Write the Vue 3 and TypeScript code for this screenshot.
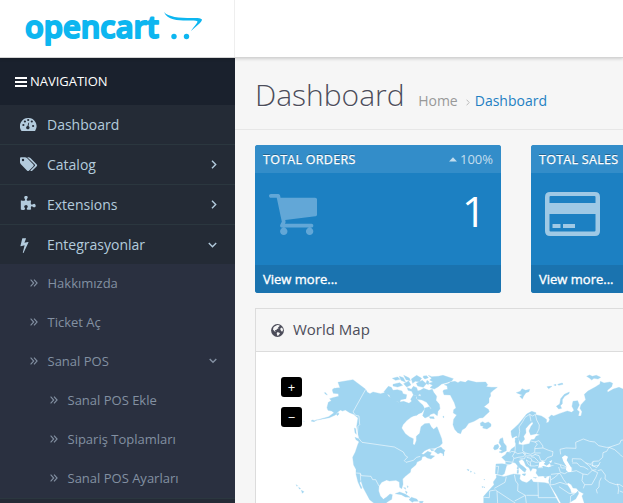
<script setup lang="ts">
interface MenuItem {
  label: string
  icon: string
  arrow?: 'right' | 'down'
}

interface SubItem {
  label: string
  nested?: boolean
  open?: boolean
}

interface Tile {
  title: string
  icon: string
  change?: string
  value?: string
}

const menu: MenuItem[] = [
  { label: 'Dashboard', icon: 'gauge' },
  { label: 'Catalog', icon: 'tags', arrow: 'right' },
  { label: 'Extensions', icon: 'puzzle', arrow: 'right' },
  { label: 'Entegrasyonlar', icon: 'bolt', arrow: 'down' },
]

const submenu: SubItem[] = [
  { label: 'Hakkımızda' },
  { label: 'Ticket Aç' },
  { label: 'Sanal POS', open: true },
  { label: 'Sanal POS Ekle', nested: true },
  { label: 'Sipariş Toplamları', nested: true },
  { label: 'Sanal POS Ayarları', nested: true },
]

const tiles: Tile[] = [
  { title: 'TOTAL ORDERS', icon: 'cart', change: '100%', value: '1' },
  { title: 'TOTAL SALES', icon: 'card' },
]

// Land shapes of the western half of the map
const westLand: string[] = [
  'M219 67L264 59L302 88L307 97L315 101L324 96L347 101L362 97L371 109L381 116L400 127L416 124L432 130L444 121L450 111L463 126L474 136L479 146L470 158L452 164L438 172L426 181L414 194L410 204L421 221L434 231L445 236L444 253L449 255L454 242L454 229L464 220L468 200L479 191L493 190L499 201L506 208L516 200L523 218L530 236L532 250L524 258L510 265L492 266L479 272L469 282L476 283L488 274L499 278L495 286L509 288L498 297L487 294L480 289L472 290L469 300L456 306L453 314L438 327L436 337L421 349L413 357L414 373L410 386L404 382L403 366L393 361L373 363L365 360L350 367L342 378L341 393L346 408L355 418L365 411L375 402L382 404L380 418L368 425L361 431L329 431L314 419L306 404L294 382L288 362L284 369L291 384L288 386L279 366L273 342L273 328L266 315L263 292L271 276L279 252L282 246L279 221L275 199L279 174L266 163L254 158L241 150L232 153L227 150L219 155L211 165L193 173L157 180L191 170L207 158L200 153L189 151L186 143L190 127L199 122L194 116L203 113L221 109L220 101L205 100L202 91L214 84L225 83Z',
  'M113 183l6 2M138 183l5-3 5 2 9-3-10 6zM178 98l4 0 5 7-5-2zM214 162l6-4 2 4-5 5zM202 88l8-4 5 4-5 6z',
  'M268 204l4 2 2 17-4-5zM270 232l14 6 8 9-7 0-12-8z',
  'M93 374l5 3-2 2zM101 382l6 4-4 1zM109 391l8 4-5 5z',
  'M357 95L370 79L379 82L384 91L397 89L411 93L414 101L425 104L423 116L407 119L404 127L385 122L377 116L373 105L363 102Z',
  'M382 55l16-4 7 7-13 3zM384 73l20-5 9 8-15 5-14-3zM403 49l12 4 7 14-14-6zM416 71l15-8 7 12-13 6zM416 46l17 8 3 8-13-3zM439 57l16-11 15 9-7 10-12-1-8 6zM454 70l18-9 12 10-9 11-17-4zM475 48l10-1 5 6-10 4-5-4zM486 61l6 4-2 9-7-4z',
  'M490 46L500 50L520 49L534 46L565 56L560 63L545 68L530 72L520 80L508 87L495 83L503 76L491 70L504 66L494 60L500 55Z',
  'M427 83l12 5 6-9 10 4 3 9 16-1 12 12-8 6-12-8-10 7-11-4-5-10-11-3zM445 105l10 4-5 12-9 4-4-7zM462 93l14-8 16 6 10-3 4 9 9 12-2 12 10 12 2 13-6 8-2 13-10-7-14 4-6-8 12-10-14-19-14-7-15-2-1-13 13 4z',
  'M437 151l11-8 9 5 8 9-9 9-13 2-10-8zM480 144l13-4 8 12-8 16-13 6-7-7zM416 128l13 3 5 9-11 5-8-6zM493 170l13 0 2 6-13-1z',
  'M508 274l8-9 12-4 6 7 6 3-5 10-9-3-7 4zM496 267l12 3-8 3z',
  'M391 401l13-5 18 7 13 9-14-1-12-7zM432 419l7-7 16 5 5 7-13 0-5 3zM463 424l12 0-3 5-8-1zM416 383l5 0 1 5zM426 377l4 3-2 3zM421 393l6 3-3 5z',
]

const westBorders: string[] = [
  'M302 88L264 156L272 166L282 168L284 194L279 199L277 224L282 236L291 247L388 261L415 276L421 287L428 291L418 302L423 307L445 301L455 292L466 289',
  'M273 339L286 340L289 347L318 349L323 359L332 359L342 378M286 341L287 362',
]

// Land shapes of the eastern half of the map
const eastLand: string[] = [
  'M2 90L14 88L12 77L4 74L18 70L22 66L36 64L45 68L52 64L67 67L75 61L100 67L128 66L134 74L130 80L145 82L163 82L151 91L142 99L143 108L138 115L138 128L123 140L136 148L139 155L129 164L120 173L110 174L93 184L77 190L67 204L57 210L53 221L44 218L35 208L30 194L32 178L41 165L31 159L32 149L39 144L34 128L27 115L22 105L3 104L0 94Z',
  'M112 189L119 185L126 190L136 186L144 192L144 199L132 207L119 204L121 199L113 197Z',
  'M220 98l12-4 5-8 11 5 12-3-2 7-9 3-7 10-4 9-8-8 8-4-11-4zM312 80l8-1 7 0-10 7zM332 75l7-2 0 4zM344 73l14-4 2 4-13 3zM431 49l9-4 8 4 12-3 13 6-8 5-12-2-7 5-7-6z',
  'M340 139L350 132L353 116L364 103L379 96L378 101L365 109L358 119L358 131L352 137L356 145L347 147Z',
  'M204 213L215 203L227 192L239 177L251 162L266 154L279 158L278 164L295 168L305 174L311 179L310 189L317 186L320 178L317 173L325 165L332 168L349 161L373 153L386 157L393 151L387 139L390 124L404 122L409 135L402 149L409 155L406 168L414 168L417 155L411 145L414 134L428 119L424 103L435 93L457 81L471 72L472 64L483 69L501 66L509 70L506 80L493 91L494 97L511 87L528 82L540 87V430H424L417 408L422 401L407 393L400 385L390 384L385 374L377 369L371 371L382 388L385 399L398 400L405 393L407 401L398 417L384 425L376 430H354L340 404L326 382L319 372L317 362L321 347L306 350L300 348L286 349L279 339L282 329L278 326L269 325L263 334L258 323L249 318L243 304L237 298L227 303L231 312L244 322L250 328L246 337L240 333L226 320L217 309L210 307L203 312L191 316L184 341L177 346L165 343L157 341L159 312L177 311L188 313L188 304L176 292L187 284L192 276L199 277L205 267L218 258L218 245L216 235L225 232L228 242L227 253L240 255L259 251L264 239L274 238L279 229L291 224L280 221L263 225L258 213L264 199L270 191L268 185L258 194L248 206L249 219L242 229L245 238L235 249L230 244L226 233L220 228L208 234L205 224Z',
  'M160 345L183 350L212 342L232 344L230 357L237 364L251 368L258 364L265 357L271 366L285 367L306 368L317 371L323 382L343 421L348 430H122V409L138 391L153 374L151 366L160 353Z',
  'M168 276L178 272L169 267L175 259L168 248L171 237L179 233L182 248L190 258L190 272L176 279ZM151 265L155 256L165 253L168 260L164 267L155 270Z',
  'M223 330l4 1-1 9-4 0zM224 319l3 2-1 8-4-3zM238 342l10-1-2 6-7-2zM271 352l10 1-2 2zM303 352l7-2-1 4zM217 241l7 0-1 9-7-3z',
  'M72 328l6 1-2 4zM82 333l4 2-3 2zM93 338l4 2-3 0zM117 379l3 2-2 2zM122 380l4 2-3 1zM123 357l2 2-2 1zM0 168l3 2-1 3-2-1zM0 277l3 2-1 8-2 0z',
]

const seas: string[] = [
  'M286 322L289 307L299 303L307 307L302 312L311 317L321 310L323 317L335 315L317 322L301 318L294 322Z',
  'M357 292L366 286L375 290L371 301L378 312L385 323L385 336L376 337L369 330L370 319L361 304Z',
  'M318 305L328 300L324 309Z',
]

const eastBorders: string[] = [
  'M227 232L230 214L228 201L239 185L246 172L260 163L269 168L277 163L281 180L289 195L288 207L281 221M260 163L264 184',
  'M263 243L276 246L283 252L276 262L275 277L263 283L248 279L239 273L240 255M275 246L288 242L299 257L300 264L275 266M300 264L317 271L330 275L328 288L313 293L305 303L293 301L288 287L275 283M275 279L293 279',
  'M217 259L216 276L206 274L200 278M216 276L224 281L239 278L248 281L241 290L225 292L215 295L208 289L216 276M239 278L251 288L269 287L277 283M247 288L245 296L230 297M251 292L264 295L267 302L261 307L249 299M264 290L274 292L286 304M266 302L278 307L290 306M262 307L263 318L275 318L285 316M263 318L255 312L250 300',
  'M188 312L204 316M159 319L167 319L164 341M188 304L209 307L213 294',
  'M353 283L351 268L369 264L399 265L398 247L421 237L440 244L455 246L467 257L490 262L498 262L491 274L480 278L479 292L467 303L451 304L442 313L427 308L414 297L388 296L388 306M498 262L515 269L533 285L540 292M498 262L519 255L530 251L534 241L540 240',
  'M334 309L353 314L369 320M352 315L355 324L371 324M347 321L352 337L365 341L374 336M285 323L300 323M324 343L351 340L362 359L371 371M322 347L323 360L337 351L347 341M323 360L321 375L335 373L351 367L373 374M348 380L378 400L395 401L383 408L382 427',
  'M386 322L386 335L400 332L420 342L434 344L448 331L460 329M387 309L402 309L411 319L423 321L436 329M427 308L441 320L448 331M420 342L417 362L425 374L421 385M425 374L446 374L459 351L464 338L449 331M450 304L448 318L466 317L472 306M442 313L461 323L468 314M464 332L475 329L487 345L486 357L499 367L519 374L529 373L540 380M475 353L469 365L468 381L460 389L463 400M523 371L527 386L525 402M530 393L540 397',
  'M190 350L186 367L154 385M122 412L139 413L140 393L157 390L218 430M162 394L164 430M214 344L218 363L225 372L224 393L247 406L215 423M285 367L286 413M247 406L250 430M286 413H342M286 406L250 406',
]
</script>

<template>
  <div class="screen">
    <header class="topbar">
      <div class="brand">
        <svg class="logo" width="180" height="44" viewBox="24 6 180 44">
          <text x="25" y="37.800" textLength="134" lengthAdjust="spacingAndGlyphs">opencart</text>
          <path d="M164 12C168 17 179 18 192 18C200 18 205 18 200 23L191 31C194 26 199 22 197 21C190 19 169 24 164 12Z" />
          <circle cx="174" cy="36.500" r="2.700" />
          <circle cx="186.500" cy="36.500" r="2.700" />
        </svg>
      </div>
    </header>

    <div class="layout">
      <nav class="sidebar">
        <div class="nav-title">
          <svg width="12" height="10" viewBox="0 0 12 10">
            <path d="M0 0h12v2H0zM0 4h12v2H0zM0 8h12v2H0z" />
          </svg>
          <span>NAVIGATION</span>
        </div>

        <ul class="menu">
          <li v-for="item in menu" :key="item.label">
            <span class="menu-icon">
              <svg v-if="item.icon === 'gauge'" width="17" height="14" viewBox="0 0 17 14">
                <path fill-rule="evenodd" d="M8.200 0A8.200 8.200 0 0 0 1.300 12.700Q1.500 13 2 13H14.500Q15 13 15.200 12.700A8.200 8.200 0 0 0 8.200 0ZM2.300 7a1.100 1.100 0 1 0 2.200 0a1.100 1.100 0 1 0-2.200 0M3.800 3.500a1.100 1.100 0 1 0 2.200 0a1.100 1.100 0 1 0-2.200 0M7.100 2a1.100 1.100 0 1 0 2.200 0a1.100 1.100 0 1 0-2.200 0M10.700 3.500a1.100 1.100 0 1 0 2.200 0a1.100 1.100 0 1 0-2.200 0M12 8a1.100 1.100 0 1 0 2.200 0a1.100 1.100 0 1 0-2.200 0M9.200 4.800L8.500 8.100A1.700 1.700 0 1 1 7.500 8L8.400 4.700Z" />
              </svg>
              <svg v-else-if="item.icon === 'tags'" width="18" height="15" viewBox="0 0 18 15">
                <path fill-rule="evenodd" d="M0 1.200Q0 .2 1 .2H5Q6 .2 7 1L13.400 7.500Q14.200 8.300 13.400 9.200L8.900 13.700Q8 14.500 7.200 13.700L.9 7.300Q0 6.300 0 5.300ZM1.800 3a1.200 1.200 0 1 0 2.400 0a1.200 1.200 0 1 0-2.400 0" />
                <path d="M7.200.2H8.500Q9.400.2 10.400 1L16.800 7.500Q17.600 8.300 16.800 9.200L12.200 13.700Q11.300 14.500 10.300 13.500L14.700 9.100Q15.500 8.300 14.700 7.500Z" />
              </svg>
              <svg v-else-if="item.icon === 'puzzle'" class="puzzle" width="16" height="16" viewBox="0 0 1792 1792">
                <path d="M1755 1083q0 81-44.500 135t-123.500 54q-41 0-77.500-17.500t-59-38-56.500-38-71-17.500q-110 0-110 124 0 39 16 115t15 115v5q-22 0-33 1-34 3-97.500 11.500t-115.500 13.500-98 5q-61 0-103-26.500t-42-83.500q0-37 17.500-71t38-56.500 38-59 17.500-77.500q0-79-54-123.500t-135-44.500q-84 0-143 45.500t-59 127.500q0 43 15 83t33.500 64.500 33.500 53 15 50.500q0 45-46 89-37 35-117 35-95 0-245-24-9-2-27.500-4t-27.500-4l-13-2q-1 0-3-1-2 0-2-1v-1024q2 1 17.500 3.500t34 5 21.500 3.500q150 24 245 24 80 0 117-35 46-44 46-89 0-22-15-50.500t-33.500-53-33.500-64.500-15-83q0-82 59-127.500t144-45.500q80 0 134 44.500t54 123.500q0 41-17.500 77.500t-38 59-38 56.500-17.500 71q0 57 42 83.500t103 26.500q64 0 180-15t163-17v2q-1 2-3.500 17.500t-5 34-3.500 21.500q-24 150-24 245 0 80 35 117 44 46 89 46 22 0 50.500-15t53-33.500 64.500-33.500 83-15q82 0 127.500 59t45.500 143z" />
              </svg>
              <svg v-else width="9" height="16" viewBox="440 0 920 1792">
                <path d="M1333 566q18 20 7 44l-540 1157q-13 25-42 25-4 0-14-2-17-5-25.500-19t-4.500-30l197-808-406 101q-4 1-12 1-18 0-31-11-18-15-13-39l201-825q4-14 16-23t28-9h328q19 0 32 12.500t13 29.500q0 8-5 18l-171 463 396-98q8-2 12-2 19 0 34 15z" />
              </svg>
            </span>
            <span class="menu-label">{{ item.label }}</span>
            <svg v-if="item.arrow === 'right'" class="arrow" width="6" height="9" viewBox="0 0 6 9">
              <path d="M1 .8L4.700 4.500L1 8.200" />
            </svg>
            <svg v-else-if="item.arrow === 'down'" class="arrow" width="9" height="6" viewBox="0 0 9 6">
              <path d="M.8 1L4.500 4.700L8.200 1" />
            </svg>
          </li>
        </ul>

        <ul class="submenu">
          <li v-for="item in submenu" :key="item.label" :class="{ nested: item.nested }">
            <svg class="chevrons" width="8" height="8" viewBox="0 0 8 8">
              <path d="M.6.700L3.700 4L.6 7.300M4 .7L7.100 4L4 7.300" />
            </svg>
            <span>{{ item.label }}</span>
            <svg v-if="item.open" class="arrow" width="8" height="6" viewBox="0 0 8 6">
              <path d="M.7 1L4 4.300L7.300 1" />
            </svg>
          </li>
        </ul>
      </nav>

      <main class="content">
        <div class="page-header">
          <h1>Dashboard</h1>
          <div class="crumbs">
            <span>Home</span>
            <svg width="4" height="7" viewBox="0 0 4 7"><path d="M.6.700L3.200 3.500L.6 6.300" /></svg>
            <a>Dashboard</a>
          </div>
        </div>

        <div class="tiles">
          <section v-for="tile in tiles" :key="tile.title" class="tile">
            <div class="tile-head">
              <span>{{ tile.title }}</span>
              <span v-if="tile.change" class="change">
                <svg width="8" height="5" viewBox="0 0 8 5"><path d="M0 4.500L4 .3L8 4.500Z" /></svg>
                {{ tile.change }}
              </span>
            </div>
            <div class="tile-body">
              <svg v-if="tile.icon === 'cart'" class="cart" width="48" height="41" viewBox="64 256 1664 1408" preserveAspectRatio="none">
                <path d="M704 1536q0 52-38 90t-90 38-90-38-38-90 38-90 90-38 90 38 38 90zm896 0q0 52-38 90t-90 38-90-38-38-90 38-90 90-38 90 38 38 90zm128-1088v512q0 24-16.500 42.500t-40.500 21.500l-1044 122q13 60 13 70 0 16-24 64h920q26 0 45 19t19 45-19 45-45 19h-1024q-26 0-45-19t-19-45q0-11 8-31.500t16-36 21.500-40 15.500-29.500l-177-823h-204q-26 0-45-19t-19-45 19-45 45-19h256q16 0 28.500 6.500t19.500 15.500 13 24.500 8 26 5.500 29.500 4.500 26h1201q26 0 45 19t19 45z" />
              </svg>
              <svg v-else class="card" width="55" height="44" viewBox="0 0 55 44">
                <path fill-rule="evenodd" d="M5 0H50Q55 0 55 5V39Q55 44 50 44H5Q0 44 0 39V5Q0 0 5 0ZM5.500 4Q4.500 4 4.500 5V11H50.500V5Q50.500 4 49.500 4ZM4.500 22V38.500Q4.500 39.500 5.500 39.500H49.500Q50.500 39.500 50.500 38.500V22ZM7.500 32H15.500V36H7.500ZM18 32H30V36H18Z" />
              </svg>
              <span class="value">{{ tile.value }}</span>
            </div>
            <a class="tile-foot">View more...</a>
          </section>
        </div>

        <section class="panel">
          <div class="panel-head">
            <svg width="13" height="13" viewBox="0 0 13 13">
              <circle cx="6.500" cy="6.500" r="6.400" />
              <path class="cut" d="M6.200 1L8.600 1.300L8.300 2.500L7 3.200L7.600 4.200L6 5L5.200 6.200L4.300 6L3.900 6.800L4.800 7.500L4 7.800L2.600 6.300L1.900 5.500L2.700 3L4.400 2ZM6 8.200L8 8.600L9 9.500L7.600 11.200L6.600 11.900L5.700 9.800ZM10 3.800L11.200 3.800L12 5.600L11.700 7.200L10.600 7.500L9.700 6.300L9.200 5Z" />
            </svg>
            <span>World Map</span>
          </div>
          <div class="map">
            <svg class="world" width="367" height="151" viewBox="256 352 367 151">
              <g transform="translate(265 360) scale(.33333)">
                <path v-for="(d, i) in westLand" :key="'wl' + i" class="land" :d="d" />
                <path v-for="(d, i) in westBorders" :key="'wb' + i" class="border" :d="d" />
              </g>
              <g transform="translate(443 360) scale(.33333)">
                <path v-for="(d, i) in eastLand" :key="'el' + i" class="land" :d="d" />
                <path v-for="(d, i) in seas" :key="'s' + i" class="sea" :d="d" />
                <path v-for="(d, i) in eastBorders" :key="'eb' + i" class="border" :d="d" />
              </g>
            </svg>
            <div class="zoom">
              <button type="button">+</button>
              <button type="button">−</button>
            </div>
          </div>
        </section>
      </main>
    </div>
  </div>
</template>

<style>
body {
  overflow: hidden;
}
</style>

<style scoped>
.screen {
  display: flex;
  flex-direction: column;
  width: 623px;
  height: 503px;
  overflow: hidden;
  box-sizing: border-box;
  background: #f6f6f6;
  font-family: "Open Sans", "Noto Sans", sans-serif;
}
ul {
  list-style: none;
  margin: 0;
  padding: 0;
}
svg {
  display: block;
  flex: none;
}
.topbar {
  position: relative;
  flex: none;
  display: flex;
  height: 57px;
  background: #fff;
  border-bottom: 1px solid #d4d4d4;
  box-shadow: 0 1px 3px rgba(0, 0, 0, 0.16);
}
.brand {
  width: 235px;
  padding: 6px 0 0 24px;
  box-sizing: border-box;
  border-right: 1px solid #eee;
}
.logo {
  overflow: visible;
  fill: #0db6f0;
}
.logo text {
  font-family: "Open Sans", sans-serif;
  font-size: 31px;
  font-weight: 600;
  stroke: #0db6f0;
  stroke-width: 2px;
  stroke-linejoin: round;
}
.layout {
  flex: 1;
  display: flex;
  min-height: 0;
}
.sidebar {
  flex: none;
  width: 235px;
  background: #242b36;
}
.nav-title {
  display: flex;
  align-items: center;
  gap: 3px;
  height: 47px;
  padding-left: 15px;
  background: #1a212d;
  color: #fff;
  font-size: 13px;
}
.nav-title svg {
  fill: #fff;
}
.nav-title span {
  position: relative;
  top: -1px;
  letter-spacing: -0.02px;
}
.menu li {
  display: flex;
  align-items: center;
  height: 40px;
  padding: 0 18px 0 20px;
  box-sizing: border-box;
  border-bottom: 1px solid #2b373f;
  color: #b3cbdd;
  font-size: 14px;
}
.menu li:last-child {
  height: 39px;
  border-bottom: 0;
}
.menu-icon {
  width: 27px;
  fill: #b3cbdd;
}
.puzzle {
  position: relative;
  top: -1px;
}
.menu-label {
  flex: 1;
}
.arrow {
  fill: none;
  stroke: currentColor;
  stroke-width: 1.4;
}
.submenu {
  background: #2a3040;
  border-bottom: 1px solid #2b373f;
}
.submenu li {
  display: flex;
  align-items: center;
  height: 39px;
  padding: 0 18px 2px 30px;
  box-sizing: border-box;
  color: #8390a2;
  font-size: 13px;
}
.submenu li.nested {
  padding-left: 50px;
}
.submenu span {
  flex: 1;
  margin-left: 9.500px;
}
.chevrons {
  fill: none;
  stroke: currentColor;
  stroke-width: 1.1;
}
.content {
  flex: 1;
  min-width: 0;
  overflow: hidden;
}
.page-header {
  display: flex;
  align-items: baseline;
  height: 71px;
  padding-left: 20px;
  border-bottom: 1px solid #e7e7e7;
}
h1 {
  margin: 16px 0 0;
  color: #4c4d5a;
  font-size: 30px;
  font-weight: 300;
  line-height: 42px;
  text-shadow: 0 1px #fff;
}
.crumbs {
  display: flex;
  align-items: center;
  margin-left: 13.500px;
  color: #999;
  font-size: 14px;
}
.crumbs svg {
  margin: 3px 5px 0 8px;
  fill: none;
  stroke: #bbb;
}
.crumbs a {
  color: #1e80c3;
}
.tiles {
  display: flex;
  gap: 30px;
  padding: 15px 0 15px 20px;
}
.tile {
  flex: none;
  width: 246px;
  height: 148px;
  overflow: hidden;
  border-radius: 3px;
  background: #1c80c2;
  color: #fff;
  font-size: 13px;
}
.tile-head {
  display: flex;
  justify-content: space-between;
  height: 28px;
  padding: 0 8px;
  background: #338dc9;
  line-height: 29px;
  font-size: 12.500px;
  letter-spacing: 0.28px;
  white-space: nowrap;
  -webkit-text-stroke: 0.25px currentColor;
  text-shadow: 0 -1px rgba(0, 0, 0, 0.3);
}
.change {
  display: flex;
  align-items: center;
  gap: 3px;
  opacity: 0.7;
  font-size: 13px;
  letter-spacing: 0;
  -webkit-text-stroke: 0;
  text-shadow: none;
}
.change svg {
  fill: #fff;
}
.tile-body {
  display: flex;
  align-items: flex-start;
  justify-content: space-between;
  height: 92px;
  padding: 0 15px;
  box-sizing: border-box;
}
.cart {
  margin: 21px 0 0 -1px;
  fill: #62a7d7;
}
.card {
  margin: 19px 0 0 -1px;
  fill: #9fc9e5;
}
.value {
  font-size: 42px;
  line-height: 76px;
}
.tile-foot {
  display: block;
  height: 28px;
  padding-left: 8px;
  background: #1a73af;
  font-size: 13px;
  line-height: 28px;
  -webkit-text-stroke: 0.35px currentColor;
}
.panel {
  width: 400px;
  height: 220px;
  margin-left: 20px;
  border: 1px solid #dcdcdc;
  background: #fff;
}
.panel-head {
  display: flex;
  align-items: center;
  gap: 9px;
  height: 42px;
  padding-left: 15px;
  border-bottom: 1px solid #dcdcdc;
  background: #f6f6f6;
  color: #4c4d5a;
  font-size: 15px;
}
.panel-head span {
  position: relative;
  top: -1px;
}
.panel-head svg {
  fill: #4c4d5a;
}
.panel-head .cut {
  fill: #f6f6f6;
}
.map {
  position: relative;
}
.land {
  fill: #a0d5f1;
  stroke: #a0d5f1;
  stroke-width: 1;
}
.sea {
  fill: #fff;
}
.border {
  fill: none;
  stroke: #fff;
  stroke-width: 2;
  stroke-linejoin: round;
  opacity: 0.85;
}
.zoom {
  position: absolute;
  top: 25px;
  left: 25px;
  display: flex;
  flex-direction: column;
  gap: 10px;
}
.zoom button {
  width: 21px;
  height: 20px;
  padding: 0;
  border: 0;
  border-radius: 3px;
  background: #000;
  color: #fff;
  font-family: "Open Sans", sans-serif;
  font-size: 13px;
  line-height: 20px;
}
</style>
